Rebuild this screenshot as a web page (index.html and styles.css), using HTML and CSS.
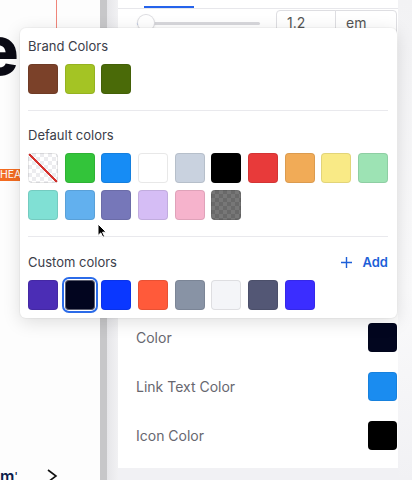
FILE: index.html
```html
<!DOCTYPE html>
<html lang="en">
<head>
    <meta charset="UTF-8">
    <meta name="viewport" content="width=device-width, initial-scale=1.0">
    <title>Color Picker</title>
    <link rel="stylesheet" href="styles.css">
</head>
<body>
    <div class="app">
        <div class="preview">
            <div class="frame"></div>
            <div class="big-e">e</div>
            <span class="tag">HEADLINE</span>
            <div class="more">
                <span>m<span class="tick">'</span></span>
                <svg width="12" height="14" viewBox="0 0 12 14"><path d="M2 1l8 6-8 6" fill="none" stroke="#111" stroke-width="1.6"/></svg>
            </div>
        </div>
        <div class="gutter"></div>
        <div class="panel">
            <div class="tabs"><span class="tab-active"></span></div>
            <div class="size-row">
                <div class="slider"><span class="knob"></span></div>
                <div class="field">1.2</div>
                <div class="field unit">em</div>
            </div>
            <ul class="settings">
                <li><span>Color</span><span class="chip navy"></span></li>
                <li><span>Link Text Color</span><span class="chip blue"></span></li>
                <li><span>Icon Color</span><span class="chip black"></span></li>
            </ul>
            <div class="band"></div>
        </div>
        <div class="scroll-track"></div>
    </div>

    <div class="picker">
        <div class="section first">
            <div class="label">Brand Colors</div>
            <div class="swatches">
                <span class="sw" style="background:#7b4129"></span>
                <span class="sw" style="background:#a4c424"></span>
                <span class="sw" style="background:#4a6a08"></span>
            </div>
        </div>
        <div class="section">
            <div class="label">Default colors</div>
            <div class="swatches">
                <span class="sw none"></span>
                <span class="sw" style="background:#33c43a"></span>
                <span class="sw" style="background:#168cf5"></span>
                <span class="sw" style="background:#ffffff"></span>
                <span class="sw" style="background:#c9d2df"></span>
                <span class="sw" style="background:#000000"></span>
                <span class="sw" style="background:#e83a3a"></span>
                <span class="sw" style="background:#f1ab57"></span>
                <span class="sw" style="background:#f9ea86"></span>
                <span class="sw" style="background:#9de3b4"></span>
                <span class="sw" style="background:#80e0d4"></span>
                <span class="sw" style="background:#62b0ee"></span>
                <span class="sw" style="background:#7677b9"></span>
                <span class="sw" style="background:#d5bdf5"></span>
                <span class="sw" style="background:#f6b3cc"></span>
                <span class="sw smoke"></span>
            </div>
        </div>
        <div class="section last">
            <div class="label-row">
                <div class="label">Custom colors</div>
                <button class="add-btn">
                    <svg width="11" height="11" viewBox="0 0 11 11"><path d="M5.5 0v11M0 5.5h11" stroke="#1d5fd8" stroke-width="1.4"/></svg>
                    Add
                </button>
            </div>
            <div class="swatches">
                <span class="sw" style="background:#4b2db5"></span>
                <span class="sw selected" style="background:#02051f"></span>
                <span class="sw" style="background:#0a37ff"></span>
                <span class="sw" style="background:#ff5a3a"></span>
                <span class="sw" style="background:#8893a5"></span>
                <span class="sw" style="background:#f4f5f8"></span>
                <span class="sw" style="background:#535775"></span>
                <span class="sw" style="background:#3b2dff"></span>
            </div>
        </div>
    </div>

    <svg class="cursor" width="10" height="15" viewBox="0 0 10 15"><path d="M1 1v11.5l2.8-2.6 2 4.3 1.8-.8-2-4.2H9.2z" fill="#000" stroke="#fff" stroke-width="1"/></svg>
</body>
</html>
```

FILE: styles.css
```css
body {
    margin: 0;
    width: 412px;
    height: 480px;
    overflow: hidden;
    font-family: Inter, "Noto Sans", sans-serif;
    background-color: #fff;
    color: #333;
    position: relative;
}
.app {
    display: flex;
    height: 480px;
}

/* left preview */
.preview {
    width: 100px;
    display: flex;
    flex-direction: column;
    align-items: flex-start;
    overflow: hidden;
    background-color: #fdfdfd;
}
.frame {
    width: 57px;
    height: 28px;
    border-right: 1.5px solid #f0857a;
    box-sizing: border-box;
}
.big-e {
    font-size: 68px;
    font-weight: 800;
    line-height: 44px;
    margin-left: -22px;
    color: #0a0a14;
}
.tag {
    margin-top: 97px;
    margin-left: -1px;
    background-color: #f36c21;
    color: #fff;
    font-size: 10.5px;
    line-height: 12px;
    padding: 0 3px 0 1px;
}
.more {
    margin-top: auto;
    margin-bottom: -6px;
    display: flex;
    align-items: center;
    gap: 28px;
    font-size: 16px;
    font-weight: 600;
    line-height: 20px;
    color: #0b1b4a;
}
.tick {
    font-size: 10px;
    vertical-align: top;
}

.gutter {
    width: 18px;
    background: linear-gradient(to right, #c7c7c9 0 7px, #e6e6e9 7px, #f1f1f3 18px);
}

/* right settings panel */
.panel {
    width: 280px;
    display: flex;
    flex-direction: column;
    background-color: #fff;
}
.scroll-track {
    flex: 1;
    background: linear-gradient(to bottom, #f2f2f4, #fafafb 60%, #f1f1f4 100%);
}
.tabs {
    height: 8px;
    border-bottom: 1px solid #e7e7eb;
    display: flex;
    align-items: flex-end;
    padding-left: 26px;
}
.tab-active {
    width: 50px;
    height: 2px;
    background-color: #2563eb;
}
.size-row {
    display: flex;
    align-items: flex-start;
    padding: 1px 0 0 19px;
    height: 36px;
}
.slider {
    width: 123px;
    height: 3px;
    margin-top: 12px;
    background: linear-gradient(to right, #2563eb 0 3px, #d8d8dc 3px);
    border-radius: 2px;
    position: relative;
}
.knob {
    position: absolute;
    left: 1px;
    top: -7px;
    width: 16px;
    height: 16px;
    border-radius: 50%;
    background: #fff;
    box-shadow: 0 0 0 1px #dcdce0, 0 1px 3px rgba(0, 0, 0, 0.15);
}
.field {
    margin-left: 16px;
    width: 60px;
    height: 32px;
    box-sizing: border-box;
    border: 1px solid #dedee2;
    border-radius: 4px 0 0 4px;
    padding: 3px 10px;
    font-size: 14px;
    color: #555;
}
.field.unit {
    margin-left: -1px;
    width: 62px;
    border-radius: 0 4px 4px 0;
}
.settings {
    list-style: none;
    margin: 267px 0 0;
    padding: 0;
}
.settings li {
    height: 49px;
    display: flex;
    align-items: center;
    justify-content: space-between;
    padding: 0 1px 0 18px;
    font-size: 14px;
    color: #67676f;
}
.chip {
    width: 29px;
    height: 29px;
    border-radius: 4px;
    box-shadow: inset 0 0 0 1px rgba(0, 0, 0, 0.08);
}
.chip.navy { background-color: #02061f; }
.chip.blue { background-color: #1a8cf0; }
.chip.black { background-color: #000; }
.band {
    margin-top: auto;
    height: 12px;
    background-color: #f1f1f4;
}

/* color picker popup */
.picker {
    position: absolute;
    left: 20px;
    top: 28px;
    width: 377px;
    height: 290px;
    box-sizing: border-box;
    padding: 0 9px 0 8px;
    background-color: #fff;
    border-radius: 6px;
    box-shadow: 0 4px 18px rgba(0, 0, 0, 0.13), 0 0 0 1px rgba(0, 0, 0, 0.03);
}
.section {
    padding: 16px 0;
    border-bottom: 1px solid #e9e9ed;
}
.section.first {
    padding-top: 10px;
}
.section.last {
    padding-top: 17px;
    padding-bottom: 0;
    border-bottom: none;
}
.label {
    font-size: 13px;
    line-height: 16px;
    color: #3b3d49;
    margin-bottom: 10px;
}
.label-row {
    display: flex;
    justify-content: space-between;
}
.add-btn {
    display: flex;
    align-items: flex-start;
    gap: 11px;
    border: none;
    background: none;
    padding: 0;
    font-family: inherit;
    font-size: 13px;
    font-weight: 600;
    line-height: 16px;
    color: #1d5fd8;
}
.add-btn svg {
    margin-top: 3px;
}
.swatches {
    display: grid;
    grid-template-columns: repeat(10, 30px);
    column-gap: 6.67px;
    row-gap: 7px;
}
.sw {
    width: 30px;
    height: 30px;
    border-radius: 4px;
    box-sizing: border-box;
    box-shadow: inset 0 0 0 1px rgba(0, 0, 0, 0.09);
}
.sw.none {
    background:
        linear-gradient(to top right, transparent calc(50% - 1px), #d6322e calc(50% - 1px) calc(50% + 1px), transparent calc(50% + 1px)),
        repeating-conic-gradient(#ececef 0 25%, #fff 0 50%) 0 0 / 8px 8px;
}
.sw.smoke {
    background: repeating-conic-gradient(#696969 0 25%, #777 0 50%) 0 0 / 8px 8px;
}
.sw.selected {
    box-shadow: inset 0 0 0 1px rgba(255, 255, 255, 0.35), 0 0 0 1px #fff, 0 0 0 3px #2b6be8;
}

.cursor {
    position: absolute;
    left: 97px;
    top: 223px;
}
```
